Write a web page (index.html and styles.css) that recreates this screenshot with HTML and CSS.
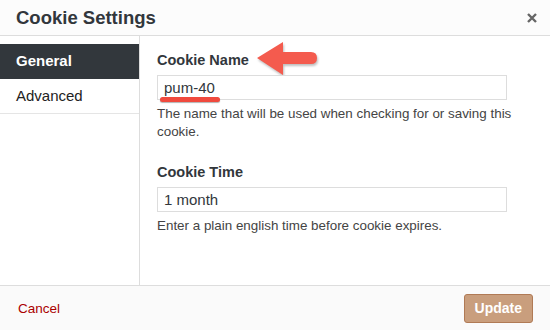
FILE: index.html
```html
<!DOCTYPE html>
<html lang="en">
<head>
    <meta charset="UTF-8">
    <title>Cookie Settings</title>
    <link rel="stylesheet" href="styles.css">
</head>
<body>
    <div class="modal">
        <header class="modal-header">
            <h1>Cookie Settings</h1>
            <svg class="close" width="10" height="10" viewBox="0 0 10 10">
                <path d="M1 1 L9 9 M9 1 L1 9" stroke="#666" stroke-width="2.4"/>
            </svg>
        </header>

        <div class="modal-body">
            <ul class="tabs">
                <li class="active">General</li>
                <li>Advanced</li>
            </ul>

            <div class="panel">
                <div class="field">
                    <label class="field-label">Cookie Name
                        <svg class="arrow" width="70" height="40" viewBox="0 0 70 40">
                            <path d="M2 18 L28 2 L28 12 L56 12 Q62 12 62 18 Q62 24 56 24 L28 24 L28 35 Z" fill="#f45b4e"/>
                        </svg>
                    </label>
                    <div class="input-wrap">
                        <input type="text" value="pum-40">
                        <span class="underline"></span>
                    </div>
                    <p class="help">The name that will be used when checking for or saving this cookie.</p>
                </div>

                <div class="field">
                    <label class="field-label">Cookie Time</label>
                    <input type="text" value="1 month">
                    <p class="help">Enter a plain english time before cookie expires.</p>
                </div>
            </div>
        </div>

        <footer class="modal-footer">
            <a href="#" class="cancel">Cancel</a>
            <button type="button">Update</button>
        </footer>
    </div>
</body>
</html>
```

FILE: styles.css
```css
/* Global styles */
body {
    margin: 0;
    font-family: "Liberation Sans", Arial, sans-serif;
    color: #444;
    background-color: #fff;
}

.modal {
    width: 550px;
    height: 330px;
    display: flex;
    flex-direction: column;
}

/* Header */
.modal-header {
    height: 35px;
    border-bottom: 1px solid #ddd;
    background-color: #fcfcfc;
    display: flex;
    align-items: center;
    justify-content: space-between;
    padding: 0 13px 0 16px;
}

.modal-header h1 {
    margin: 0;
    font-size: 18.5px;
    font-weight: bold;
    color: #32373c;
}

/* Body */
.modal-body {
    flex: 1;
    display: flex;
}

.tabs {
    list-style: none;
    margin: 0;
    padding: 8px 0 0;
    width: 139px;
    border-right: 1px solid #ddd;
}

.tabs li {
    height: 34px;
    line-height: 34px;
    padding-left: 16px;
    font-size: 15px;
    color: #222;
    border-bottom: 1px solid #e5e5e5;
}

.tabs li.active {
    background-color: #32373c;
    color: #fff;
    font-weight: bold;
    border-bottom-color: #32373c;
}

.panel {
    flex: 1;
    padding: 16px 0 0 17px;
}

.field {
    margin-bottom: 23px;
    width: 350px;
}

.field-label {
    display: block;
    position: relative;
    font-size: 14.5px;
    font-weight: bold;
    color: #32373c;
    margin-bottom: 7px;
}

.arrow {
    position: absolute;
    left: 98px;
    top: -12px;
    filter: drop-shadow(1px 2px 1px rgba(0, 0, 0, 0.25));
}

.input-wrap {
    position: relative;
}

input[type="text"] {
    display: block;
    width: 100%;
    height: 25px;
    box-sizing: border-box;
    border: 1px solid #ddd;
    padding: 0 6px;
    font-family: inherit;
    font-size: 15px;
    color: #32373c;
}

.underline {
    position: absolute;
    left: 3px;
    top: 22px;
    width: 60px;
    height: 5px;
    border-radius: 3px;
    background-color: #f04a3e;
    box-shadow: 0 1px 1px rgba(0, 0, 0, 0.3);
}

.help {
    width: 370px;
    margin: 5px 0 0;
    font-size: 13.4px;
    line-height: 18px;
    color: #444;
}

/* Footer */
.modal-footer {
    height: 44px;
    border-top: 1px solid #ddd;
    background-color: #fafafa;
    display: flex;
    align-items: center;
    justify-content: space-between;
    padding: 0 17px 0 18px;
}

.cancel {
    color: #a00;
    font-size: 13.5px;
    text-decoration: none;
}

button {
    height: 29px;
    padding: 0 10px;
    background-color: #c99e7d;
    color: #fff;
    border: 1px solid #b07a55;
    border-radius: 3px;
    font-family: inherit;
    font-size: 14px;
    font-weight: bold;
}
```
